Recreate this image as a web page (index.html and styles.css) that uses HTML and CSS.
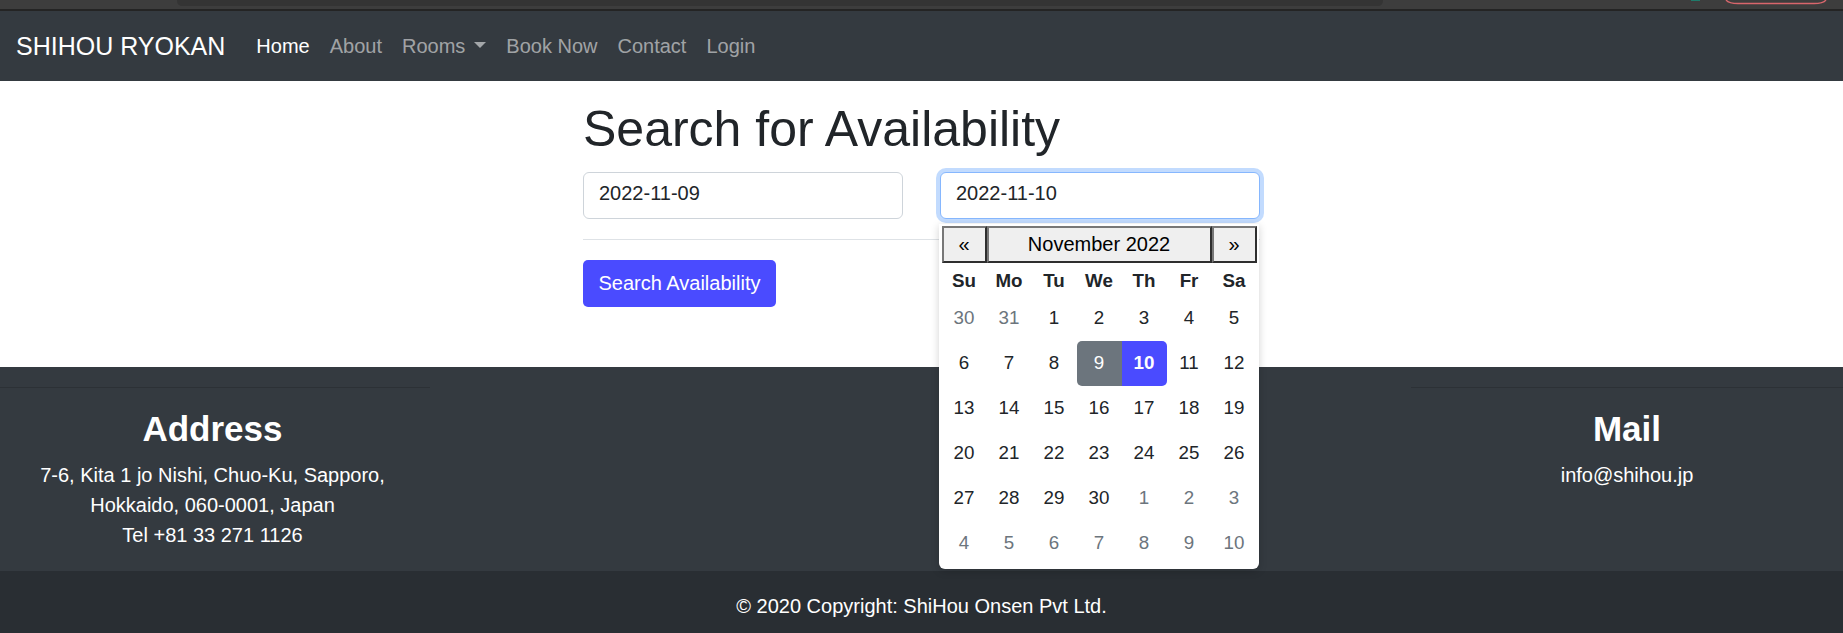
FILE: index.html
```html
<!DOCTYPE html>
<html lang="en">
<head>
<meta charset="utf-8">
<title>Shihou Ryokan</title>
<link rel="stylesheet" href="styles.css">
</head>
<body>
<div class="chrome">
  <svg width="1843" height="11" viewBox="0 0 1843 11" xmlns="http://www.w3.org/2000/svg">
    <rect x="0" y="0" width="1843" height="9" fill="#3d3d3d"/>
    <path d="M177 0 H1383 V0.5 Q1383 6 1377 6 H183 Q177 6 177 0.5 Z" fill="#343434"/>
    <rect x="1691" y="0" width="9" height="1" fill="#1f7a6a"/>
    <path d="M1726 0 Q1729 3.5 1738 3.5 H1814 Q1823 3.5 1826 0" fill="none" stroke="#d9666c" stroke-width="1.3"/>
    <rect x="0" y="9" width="1843" height="2" fill="#242424"/>
  </svg>
</div>
<nav class="navbar">
  <a class="brand" href="#">SHIHOU RYOKAN</a>
  <ul class="nav">
    <li><a class="active" href="#">Home</a></li>
    <li><a href="#">About</a></li>
    <li><a class="caret" href="#">Rooms</a></li>
    <li><a href="#">Book Now</a></li>
    <li><a href="#">Contact</a></li>
    <li><a href="#">Login</a></li>
  </ul>
</nav>
<main class="main">
  <h1 class="title">Search for Availability</h1>
  <div class="dates">
    <div class="date-wrap">
      <input class="field" type="text" value="2022-11-09">
    </div>
    <div class="date-wrap">
      <input class="field focused" type="text" value="2022-11-10">
      <div class="picker">
        <div class="pick-head">
          <button class="pbtn nav-btn">&laquo;</button>
          <button class="pbtn month-btn">November 2022</button>
          <button class="pbtn nav-btn">&raquo;</button>
        </div>
        <div class="cal">
          <span class="dow">Su</span><span class="dow">Mo</span><span class="dow">Tu</span><span class="dow">We</span><span class="dow">Th</span><span class="dow">Fr</span><span class="dow">Sa</span>
          <span class="day other">30</span><span class="day other">31</span><span class="day">1</span><span class="day">2</span><span class="day">3</span><span class="day">4</span><span class="day">5</span>
          <span class="day">6</span><span class="day">7</span><span class="day">8</span><span class="day sel-start">9</span><span class="day sel-end">10</span><span class="day">11</span><span class="day">12</span>
          <span class="day">13</span><span class="day">14</span><span class="day">15</span><span class="day">16</span><span class="day">17</span><span class="day">18</span><span class="day">19</span>
          <span class="day">20</span><span class="day">21</span><span class="day">22</span><span class="day">23</span><span class="day">24</span><span class="day">25</span><span class="day">26</span>
          <span class="day">27</span><span class="day">28</span><span class="day">29</span><span class="day">30</span><span class="day other">1</span><span class="day other">2</span><span class="day other">3</span>
          <span class="day other">4</span><span class="day other">5</span><span class="day other">6</span><span class="day other">7</span><span class="day other">8</span><span class="day other">9</span><span class="day other">10</span>
        </div>
      </div>
    </div>
  </div>
  <hr class="sep">
  <button class="btn-primary">Search Availability</button>
</main>
<footer class="footer">
  <div class="footer-main">
    <div class="fcol fleft">
      <hr class="fline">
      <h3 class="fhead">Address</h3>
      <p class="ftext">7-6, Kita 1 jo Nishi, Chuo-Ku, Sapporo,<br>Hokkaido, 060-0001, Japan<br>Tel +81 33 271 1126</p>
    </div>
    <div class="fcol fmid"></div>
    <div class="fcol">
      <hr class="fline">
      <h3 class="fhead">Mail</h3>
      <p class="ftext">info@shihou.jp</p>
    </div>
  </div>
  <div class="copyright">© 2020 Copyright: ShiHou Onsen Pvt Ltd.</div>
</footer>
</body>
</html>
```

FILE: styles.css
```css
html, body {
  margin: 0;
  padding: 0;
}
body {
  font-family: "Liberation Sans", Arial, sans-serif;
  font-size: 20px;
  line-height: 1.5;
  color: #212529;
  background: #fff;
  overflow: hidden;
}
.chrome svg {
  display: block;
}

/* navbar */
.navbar {
  background: #343a40;
  height: 70px;
  display: flex;
  align-items: center;
  padding: 0 16px;
}
.brand {
  color: #fff;
  font-size: 25px;
  line-height: 30px;
  text-decoration: none;
  margin-right: 21px;
  margin-top: -1px;
}
.nav {
  display: flex;
  list-style: none;
  margin: -1px 0 0;
  padding: 0;
}
.nav a {
  display: block;
  padding: 10px;
  color: rgba(255, 255, 255, 0.55);
  text-decoration: none;
  line-height: 30px;
  font-size: 20px;
}
.nav a.active {
  color: #fff;
}
.caret::after {
  content: "";
  display: inline-block;
  margin-left: 9px;
  vertical-align: 5px;
  border-top: 6px solid;
  border-left: 6px solid transparent;
  border-right: 6px solid transparent;
}

/* main */
.main {
  width: 677px;
  margin: 0 auto;
  padding: 18px 0 60px;
}
.title {
  font-size: 50px;
  font-weight: 400;
  line-height: 60px;
  margin: 0 0 12.7px;
  color: #212529;
}
.dates {
  display: grid;
  grid-template-columns: 320px 320px;
  column-gap: 37px;
}
.date-wrap {
  position: relative;
}
.field {
  display: block;
  width: 100%;
  box-sizing: border-box;
  height: 47px;
  border: 1px solid #ced4da;
  border-radius: 6px;
  padding: 0 15px 4px;
  font-family: "Liberation Sans", Arial, sans-serif;
  font-size: 20px;
  color: #212529;
  background: #fff;
  outline: none;
}
.field.focused {
  border-color: #86b7fe;
  box-shadow: 0 0 0 4px rgba(13, 110, 253, 0.25);
}
.sep {
  border: 0;
  border-top: 1px solid #dee2e6;
  margin: 20.6px 0 19.5px;
}
.btn-primary {
  background: #4a4bff;
  color: #fff;
  border: 0;
  border-radius: 5px;
  padding: 8.5px 15.5px;
  font-family: "Liberation Sans", Arial, sans-serif;
  font-size: 20px;
  line-height: 30px;
}

/* datepicker */
.picker {
  position: absolute;
  z-index: 10;
  top: 52px;
  left: -1px;
  width: 320px;
  box-sizing: border-box;
  padding: 2.7px 2.5px 3px;
  background: #fff;
  border-radius: 0 0 6px 6px;
  box-shadow: 0 2px 8px rgba(0, 0, 0, 0.18);
}
.pick-head {
  display: flex;
  height: 37px;
}
.pbtn {
  box-sizing: border-box;
  height: 37px;
  margin: 0;
  padding: 0 0 2px;
  border: 2px solid;
  border-color: #777 #2e2e2e #2e2e2e #777;
  background: #efefef;
  color: #000;
  font-family: "Liberation Sans", Arial, sans-serif;
  font-size: 20px;
  line-height: 1;
}
.nav-btn {
  width: 45px;
}
.month-btn {
  width: 225px;
}
.cal {
  display: grid;
  grid-template-columns: repeat(7, 45px);
  grid-template-rows: 33px repeat(6, 45px);
}
.dow,
.day {
  display: flex;
  align-items: center;
  justify-content: center;
  font-size: 18.75px;
}
.dow {
  font-weight: 700;
  padding-top: 2px;
}
.day {
  color: #212529;
  padding-bottom: 2px;
}
.day.other {
  color: #6c757d;
}
.day.sel-start {
  background: #6c757d;
  color: #fff;
  border-radius: 5px 0 0 5px;
}
.day.sel-end {
  background: #4a4bff;
  color: #fff;
  font-weight: 700;
  border-radius: 0 5px 5px 0;
}

/* footer */
.footer {
  background: #343a40;
  color: #fff;
}
.footer-main {
  display: grid;
  grid-template-columns: 430px 1fr 432px;
}
.fcol {
  padding: 20px 0 20.5px;
  text-align: center;
}
.fleft .fhead,
.fleft .ftext {
  padding-right: 5px;
}
.fline {
  margin: 0;
  border: 0;
  border-top: 1px solid #2c3136;
}
.fhead {
  font-size: 35px;
  font-weight: 700;
  line-height: 42px;
  margin: 20.5px 0 10px;
}
.ftext {
  margin: 0;
  line-height: 30px;
  font-size: 20px;
}
.copyright {
  background: rgba(0, 0, 0, 0.2);
  text-align: center;
  padding: 20px 0;
  line-height: 30px;
}
```
